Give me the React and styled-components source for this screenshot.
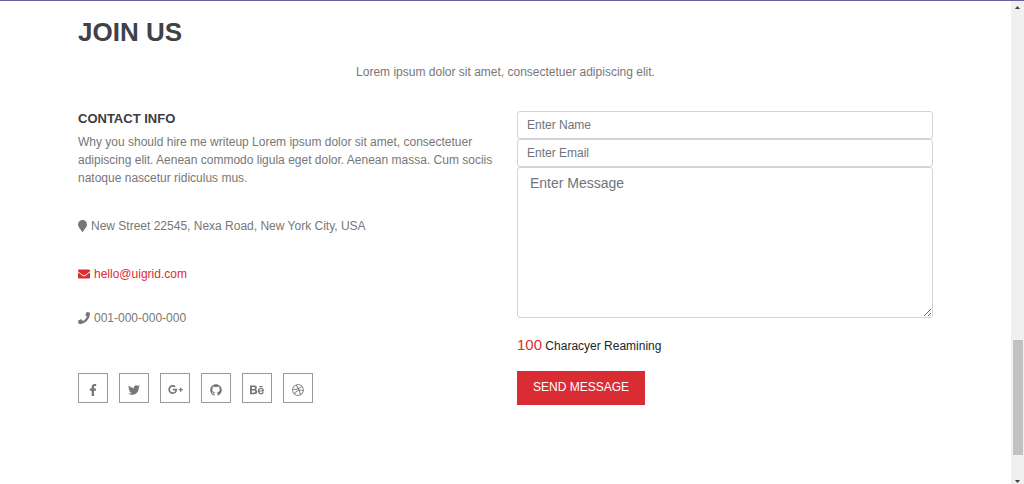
import React, { useState } from 'react';
import styled, { createGlobalStyle } from 'styled-components';
import {
  FaMapMarker,
  FaEnvelope,
  FaPhone,
  FaFacebookF,
  FaTwitter,
  FaGooglePlusG,
  FaGithub,
  FaBehance,
  FaDribbble,
} from 'react-icons/fa';

const GlobalStyle = createGlobalStyle`
  * {
    box-sizing: border-box;
  }
  body {
    margin: 0;
    background: #fff;
    color: #777;
    font: 12px/18px "Liberation Sans", Arial, sans-serif;
  }
  h1, h2, p, ul {
    margin: 0;
    padding: 0;
  }
`;

const Page = styled.div`
  display: flex;
  min-height: 100vh;
  border-top: 1px solid #65659a;
`;

const Main = styled.main`
  flex: 1;
  padding: 14px 78px 0;
`;

const Title = styled.h1`
  color: #414146;
  font-size: 26px;
  line-height: 34px;
`;

const Intro = styled.p`
  margin: 14px 0 30px;
  text-align: center;
`;

const Columns = styled.div`
  display: grid;
  grid-template-columns: 1fr 1fr;
  gap: 23px;
`;

const Info = styled.section`
  display: flex;
  flex-direction: column;
  align-items: flex-start;
`;

const Subtitle = styled.h2`
  margin-bottom: 7px;
  color: #3c3c41;
  font-size: 13px;
  line-height: 15px;
`;

const ContactLine = styled.p`
  display: flex;
  align-items: center;
  gap: 4px;
  margin-top: ${({ $space }) => $space};
`;

const MarkerIcon = styled(FaMapMarker)`
  width: 9px;
  height: 12px;
`;

const MailLink = styled.a`
  display: flex;
  align-items: center;
  gap: 4px;
  color: #d92c33;
  text-decoration: none;
`;

const SocialList = styled.ul`
  display: flex;
  gap: 11px;
  margin-top: 46px;
  list-style: none;
`;

const SocialLink = styled.a`
  display: flex;
  align-items: center;
  justify-content: center;
  width: 30px;
  height: 30px;
  padding-top: 3px;
  border: 1px solid #999;
  color: #777;
`;

const Form = styled.form`
  display: flex;
  flex-direction: column;
  align-items: flex-start;
`;

const Field = styled.input`
  width: 100%;
  height: 28px;
  padding: 4px 9px;
  border: 1px solid #ced4da;
  border-radius: 3px;
  font: inherit;

  &::placeholder {
    color: #6c757d;
    opacity: 1;
  }
`;

const Message = styled.textarea`
  display: block;
  width: 100%;
  height: 151px;
  padding: 6px 12px;
  border: 1px solid #ced4da;
  border-radius: 3px;
  font: 14px/18px "Liberation Sans", Arial, sans-serif;

  &::placeholder {
    color: #6c757d;
    opacity: 1;
  }
`;

const Remaining = styled.p`
  margin: 18px 0 16px;
  color: #212529;
`;

const Count = styled.span`
  color: #d92c33;
  font-size: 15px;
`;

const SendButton = styled.button`
  height: 34px;
  padding: 0 16px 2px;
  border: 0;
  background: #d92c33;
  color: #fff;
  font: inherit;
  text-transform: uppercase;
`;

const ScrollTrack = styled.div`
  display: flex;
  flex-direction: column;
  align-items: center;
  width: 13px;
  padding: 5px 0 1px;
  background: #f0f0f0;
`;

const Arrow = styled.svg`
  width: 5px;
  height: 3px;
  fill: #404040;
`;

const TrackSpace = styled.div`
  flex: ${({ $size }) => $size};
`;

const Thumb = styled.div`
  flex: 115;
  width: 10px;
  background: #c1c1c1;
`;

const socials = [
  { label: 'Facebook', Icon: FaFacebookF, size: 12 },
  { label: 'Twitter', Icon: FaTwitter, size: 12 },
  { label: 'Google Plus', Icon: FaGooglePlusG, size: 15 },
  { label: 'GitHub', Icon: FaGithub, size: 12 },
  { label: 'Behance', Icon: FaBehance, size: 14 },
  { label: 'Dribbble', Icon: FaDribbble, size: 12 },
];

const limit = 100;

function ContactInfo() {
  return (
    <Info>
      <Subtitle>CONTACT INFO</Subtitle>
      <p>
        Why you should hire me writeup Lorem ipsum dolor sit amet, consectetuer
        adipiscing elit. Aenean commodo ligula eget dolor. Aenean massa. Cum
        sociis natoque nascetur ridiculus mus.
      </p>
      <ContactLine $space="30px">
        <MarkerIcon /> New Street 22545, Nexa Road, New York City, USA
      </ContactLine>
      <ContactLine $space="30px">
        <MailLink href="mailto:hello@uigrid.com">
          <FaEnvelope size={12} /> hello@uigrid.com
        </MailLink>
      </ContactLine>
      <ContactLine $space="26px">
        <FaPhone size={12} /> 001-000-000-000
      </ContactLine>
      <SocialList>
        {socials.map(({ label, Icon, size }) => (
          <li key={label}>
            <SocialLink href="#" aria-label={label}>
              <Icon size={size} />
            </SocialLink>
          </li>
        ))}
      </SocialList>
    </Info>
  );
}

function ContactForm() {
  const [message, setMessage] = useState('');

  return (
    <Form onSubmit={(e) => e.preventDefault()}>
      <Field type="text" placeholder="Enter Name" aria-label="Name" />
      <Field type="email" placeholder="Enter Email" aria-label="Email" />
      <Message
        placeholder="Enter Message"
        aria-label="Message"
        maxLength={limit}
        value={message}
        onChange={(e) => setMessage(e.target.value)}
      />
      <Remaining>
        <Count>{limit - message.length}</Count> Characyer Reamining
      </Remaining>
      <SendButton type="submit">Send Message</SendButton>
    </Form>
  );
}

function Scrollbar() {
  return (
    <ScrollTrack aria-hidden="true">
      <Arrow viewBox="0 0 5 3"><path d="M2.5 0 5 3H0z" /></Arrow>
      <TrackSpace $size={330} />
      <Thumb />
      <TrackSpace $size={25} />
      <Arrow viewBox="0 0 5 3"><path d="M0 0h5L2.5 3z" /></Arrow>
    </ScrollTrack>
  );
}

export default function App() {
  return (
    <>
      <GlobalStyle />
      <Page>
        <Main>
          <Title>JOIN US</Title>
          <Intro>Lorem ipsum dolor sit amet, consectetuer adipiscing elit.</Intro>
          <Columns>
            <ContactInfo />
            <ContactForm />
          </Columns>
        </Main>
        <Scrollbar />
      </Page>
    </>
  );
}
